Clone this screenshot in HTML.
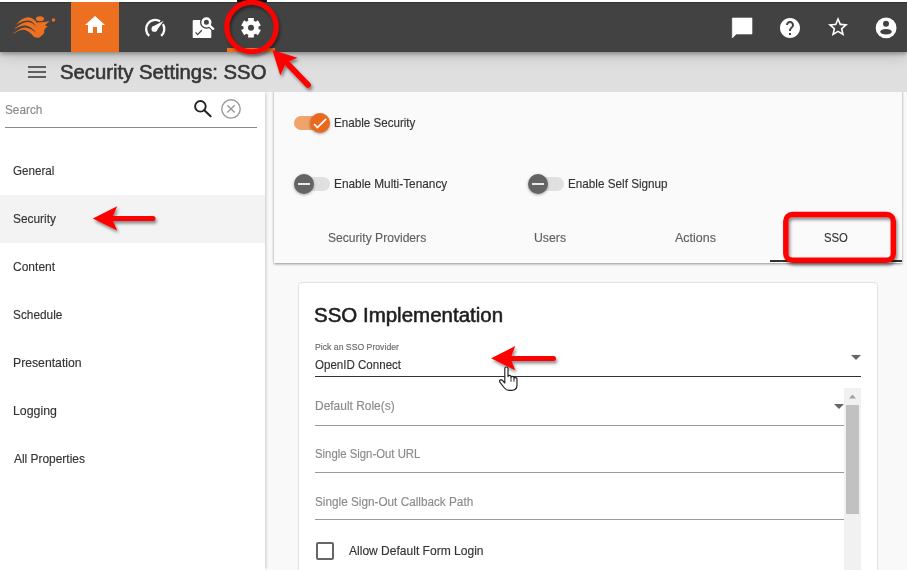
<!DOCTYPE html>
<html><head><meta charset="utf-8"><style>
html,body{margin:0;padding:0;width:907px;height:570px;overflow:hidden;background:#f9f9f9;font-family:"Liberation Sans",sans-serif;position:relative}
.a{position:absolute}
.t{position:absolute;white-space:nowrap;line-height:1;transform-origin:0 0}
</style></head><body>
<!-- content background -->
<!-- sidebar -->
<div class="a" style="left:0;top:92px;width:265px;height:478px;background:#fff;box-shadow:2px 0 3px -1px rgba(0,0,0,0.2)"></div>
<div class="a" style="left:0;top:195px;width:265px;height:48px;background:#f3f3f3"></div>
<div class="a" style="left:5px;top:127px;width:252px;height:1px;background:#8a8a8a"></div>
<!-- top card -->
<div class="a" style="left:274px;top:85px;width:628px;height:178px;background:#fafafa;box-shadow:0 1px 2.5px rgba(0,0,0,0.42)"></div>
<div class="a" style="left:770px;top:260px;width:132px;height:2px;background:#333"></div>
<!-- SSO card -->
<div class="a" style="left:298px;top:282px;width:578px;height:300px;background:#fff;border:1px solid #e2e2e2;border-radius:4px"></div>
<!-- title bar -->
<div class="a" style="left:0;top:52px;width:907px;height:40px;background:#dfdfdf"></div>
<!-- header -->
<div class="a" style="left:0;top:2px;width:907px;height:50px;background:#424242;box-shadow:0 2px 4px rgba(0,0,0,0.3), 0 4px 14px rgba(0,0,0,0.16)"></div>
<div class="a" style="left:0;top:2px;width:907px;height:1px;background:#333"></div>
<div class="a" style="left:71px;top:2px;width:48px;height:50px;background:#ec7020"></div>
<div class="a" style="left:227px;top:48px;width:48px;height:4px;background:#ec7020"></div>
<div class="a" style="left:0;top:0;width:907px;height:2px;background:#fff"></div>
<svg class="a" style="left:0;top:0" width="907" height="52" viewBox="0 0 907 52">
 <!-- logo -->
  <g fill="#ec7020">
  <ellipse cx="40" cy="18.7" rx="4.1" ry="2.5"/>
  <circle cx="53.5" cy="20" r="1.8"/>
  <path d="M13 34.3 Q20 29 25 30 Q30 31.5 33.5 36.5 Q36 38.2 39.5 37.6 L44 33.5 L44.3 29.8 L47.6 26 L44.6 25.6 L49.6 20.9 L44 22 L36.8 22.4 Q33 17.6 28.5 17.2 Q22 17.2 17 23.8 L15 28.6 Z"/>
 </g>
 <g fill="#424242">
  <path d="M16.6 24.6 Q23 20.2 28.5 20.4 Q33 20.8 36.8 27.2 Q32.5 22.2 27.5 22.1 Q21 22.3 14.6 29.2 Z"/>
  <path d="M14.6 29.6 Q20.5 25.2 25.5 25.5 Q31 26 36.3 33 Q30.5 27.6 25 27.4 Q19 27.6 12.6 34.6 Z"/>
 </g>
 <!-- home -->
 <path fill="#fff" d="M93 33v-6h4v6h5v-8h3L95 16 85 25h3v8z"/>
 <!-- gauge -->
 <path d="M149.23 35.87 A9.1 9.1 0 0 1 160.02 21.28" fill="none" stroke="#fff" stroke-width="2.3"/><path d="M162.92 24.18 A9.1 9.1 0 0 1 161.17 35.87" fill="none" stroke="#fff" stroke-width="2.3"/><circle cx="154.4" cy="28.9" r="2.9" fill="#fff"/><path d="M156.30 31.09 L163.7 20.8 L152.50 26.71 Z" fill="#fff"/>
 <!-- review -->
 <rect x="192.7" y="19.9" width="18.6" height="18.2" rx="1.2" fill="#fff"/>
 <circle cx="206.4" cy="22.3" r="6.4" fill="#424242"/>
 <path d="M209.5 25.5 L213.2 28.8" stroke="#424242" stroke-width="4.5" stroke-linecap="round"/>
 <circle cx="206.4" cy="22.3" r="3.8" fill="none" stroke="#fff" stroke-width="2.6"/>
 <path d="M209.5 25.5 L213.2 28.8" stroke="#fff" stroke-width="2.4" stroke-linecap="round"/>
 <path d="M195.6 32.4 L197.6 34.6 L201.8 30.2" fill="none" stroke="#424242" stroke-width="1.3"/>
 <!-- gear -->
 <path fill="#fff" fill-rule="evenodd" d="M248.28 20.65 L248.05 18.09 L253.95 18.09 L253.72 20.65 L255.78 21.84 L257.89 20.36 L260.84 25.48 L258.51 26.56 L258.51 28.94 L260.84 30.02 L257.89 35.14 L255.78 33.66 L253.72 34.85 L253.95 37.41 L248.05 37.41 L248.28 34.85 L246.22 33.66 L244.11 35.14 L241.16 30.02 L243.49 28.94 L243.49 26.56 L241.16 25.48 L244.11 20.36 L246.22 21.84 Z M254.00 27.75 A3.0 3.0 0 1 0 248.00 27.75 A3.0 3.0 0 1 0 254.00 27.75 Z"/>
 <!-- chat -->
 <path fill="#fff" stroke="#fff" stroke-width="0.6" stroke-linejoin="round" d="M752 18H732.3V38l4-4H752z"/>
 <!-- help -->
 <path fill="#fff" fill-rule="evenodd" transform="translate(778 16)" d="M12 2C6.48 2 2 6.48 2 12s4.48 10 10 10 10-4.48 10-10S17.52 2 12 2zm1 17h-2v-2h2v2zm2.07-7.75l-.9.92C13.45 12.9 13 13.5 13 15h-2v-.5c0-1.1.45-2.1 1.17-2.83l1.24-1.26c.37-.36.59-.86.59-1.41 0-1.1-.9-2-2-2s-2 .9-2 2H8c0-2.21 1.790-4 4-4s4 1.79 4 4c0 .88-.36 1.68-.93 2.25z"/>
 <!-- star -->
 <path fill="#fff" transform="translate(826 15)" d="M22 9.24l-7.19-.62L12 2 9.19 8.63 2 9.24l5.46 4.73L5.82 21 12 17.27 18.18 21l-1.63-7.03L22 9.24zM12 15.4l-3.76 2.27 1-4.28-3.32-2.88 4.38-.38L12 6.1l1.71 4.04 4.38.38-3.32 2.88 1 4.28L12 15.4z"/>
 <!-- account -->
 <circle cx="886.1" cy="27.9" r="10.4" fill="#fff"/>
 <circle cx="886" cy="23.8" r="3" fill="#424242"/>
 <ellipse cx="886" cy="31.7" rx="5.8" ry="2.8" fill="#424242"/>
</svg>
<!-- hamburger -->
<div class="a" style="left:28px;top:66px;width:18px;height:2px;background:#5e5e5e"></div>
<div class="a" style="left:28px;top:71px;width:18px;height:2px;background:#5e5e5e"></div>
<div class="a" style="left:28px;top:76px;width:18px;height:2px;background:#5e5e5e"></div>
<!-- search icons -->
<svg class="a" style="left:185px;top:92px" width="80" height="40" viewBox="185 92 80 40">
 <circle cx="200.4" cy="106.3" r="5.3" fill="none" stroke="#222" stroke-width="1.9"/>
 <path d="M204.3 110.2 L210.6 116.3" stroke="#222" stroke-width="2" stroke-linecap="round"/>
 <circle cx="231" cy="108.9" r="9.2" fill="none" stroke="#9a9a9a" stroke-width="1.4"/>
 <path d="M227.3 105.2 L234.7 112.6 M234.7 105.2 L227.3 112.6" stroke="#9a9a9a" stroke-width="1.4"/>
</svg>
<!-- toggles -->
<div class="a" style="left:294px;top:116px;width:34px;height:14px;border-radius:7px;background:#f0a36a"></div>
<div class="a" style="left:310px;top:113px;width:20px;height:20px;border-radius:10px;background:#e96a1e;box-shadow:0 1px 3px rgba(0,0,0,0.35)"></div>
<svg class="a" style="left:310px;top:113px" width="20" height="20" viewBox="0 0 20 20"><path d="M4 11 L7.4 14.6 L16.2 5.9" fill="none" stroke="#fff" stroke-width="1.7"/></svg>

<div class="a" style="left:295px;top:177px;width:35px;height:14px;border-radius:7px;background:#e0e0e0"></div>
<div class="a" style="left:294px;top:174px;width:20px;height:20px;border-radius:10px;background:#646464;box-shadow:0 1px 3px rgba(0,0,0,0.35)"></div>
<div class="a" style="left:298px;top:183px;width:12px;height:2px;background:#eaeaea"></div>

<div class="a" style="left:529px;top:177px;width:35px;height:14px;border-radius:7px;background:#e0e0e0"></div>
<div class="a" style="left:528px;top:174px;width:20px;height:20px;border-radius:10px;background:#646464;box-shadow:0 1px 3px rgba(0,0,0,0.35)"></div>
<div class="a" style="left:532px;top:183px;width:12px;height:2px;background:#eaeaea"></div>

<!-- form lines -->
<div class="a" style="left:315px;top:376px;width:546px;height:1px;background:#333"></div>
<div class="a" style="left:315px;top:425px;width:529px;height:1px;background:#9a9a9a"></div>
<div class="a" style="left:315px;top:472px;width:529px;height:1px;background:#9a9a9a"></div>
<div class="a" style="left:315px;top:519px;width:529px;height:1px;background:#9a9a9a"></div>
<svg class="a" style="left:0;top:0" width="907" height="570" viewBox="0 0 907 570">
 <path d="M851 355 L861 355 L856 360 Z" fill="#666"/>
 <path d="M834 404 L844 404 L839 409 Z" fill="#666"/>
</svg>
<!-- scrollbar -->
<div class="a" style="left:844px;top:388px;width:17px;height:182px;background:#f1f1f1"></div>
<div class="a" style="left:846px;top:405px;width:13px;height:109px;background:#c1c1c1"></div>
<svg class="a" style="left:844px;top:388px" width="17" height="17" viewBox="0 0 17 17"><path d="M5 10.5 L12 10.5 L8.5 6.5 Z" fill="#a3a3a3"/></svg>
<!-- checkbox -->
<div class="a" style="left:316px;top:542px;width:14px;height:14px;border:2px solid #666;border-radius:2px"></div>

<span class="t" style="left:60.39px;top:62.01px;font-size:20.36px;color:#363636;-webkit-text-stroke:0.6px #363636;transform:scaleX(0.9968)">Security Settings: SSO</span>
<span class="t" style="left:4.71px;top:103.01px;font-size:13.04px;color:#8a8a8a;-webkit-text-stroke:0.15px #8a8a8a;transform:scaleX(0.9049)">Search</span>
<span class="t" style="left:12.82px;top:164.00px;font-size:13.19px;color:#333;-webkit-text-stroke:0.15px #333;transform:scaleX(0.8817)">General</span>
<span class="t" style="left:12.80px;top:212.01px;font-size:13.04px;color:#333;-webkit-text-stroke:0.15px #333;transform:scaleX(0.9131)">Security</span>
<span class="t" style="left:12.80px;top:260.01px;font-size:13.04px;color:#333;-webkit-text-stroke:0.15px #333;transform:scaleX(0.9222)">Content</span>
<span class="t" style="left:12.81px;top:308.01px;font-size:13.04px;color:#333;-webkit-text-stroke:0.15px #333;transform:scaleX(0.9095)">Schedule</span>
<span class="t" style="left:12.72px;top:356.01px;font-size:13.04px;color:#333;-webkit-text-stroke:0.15px #333;transform:scaleX(0.9377)">Presentation</span>
<span class="t" style="left:12.71px;top:404.01px;font-size:13.04px;color:#333;-webkit-text-stroke:0.15px #333;transform:scaleX(0.9465)">Logging</span>
<span class="t" style="left:13.70px;top:452.01px;font-size:13.04px;color:#333;-webkit-text-stroke:0.15px #333;transform:scaleX(0.9146)">All Properties</span>
<span class="t" style="left:333.87px;top:117.00px;font-size:12.46px;color:#333;-webkit-text-stroke:0.15px #333;transform:scaleX(0.9333)">Enable Security</span>
<span class="t" style="left:334.05px;top:178.01px;font-size:12.90px;color:#333;-webkit-text-stroke:0.15px #333;transform:scaleX(0.9192)">Enable Multi-Tenancy</span>
<span class="t" style="left:567.56px;top:178.01px;font-size:12.90px;color:#333;-webkit-text-stroke:0.15px #333;transform:scaleX(0.9085)">Enable Self Signup</span>
<span class="t" style="left:328.19px;top:232.01px;font-size:12.75px;color:#5f5f5f;-webkit-text-stroke:0.15px #5f5f5f;transform:scaleX(0.9491)">Security Providers</span>
<span class="t" style="left:533.92px;top:232.01px;font-size:12.75px;color:#5f5f5f;-webkit-text-stroke:0.15px #5f5f5f;transform:scaleX(0.9629)">Users</span>
<span class="t" style="left:675.40px;top:232.01px;font-size:12.75px;color:#5f5f5f;-webkit-text-stroke:0.15px #5f5f5f;transform:scaleX(0.9777)">Actions</span>
<span class="t" style="left:824.24px;top:232.01px;font-size:12.75px;color:#333;-webkit-text-stroke:0.15px #333;transform:scaleX(0.8855)">SSO</span>
<span class="t" style="left:314.47px;top:305.62px;font-size:19.42px;color:#1e1e1e;-webkit-text-stroke:0.55px #1e1e1e;transform:scaleX(1.0559)">SSO Implementation</span>
<span class="t" style="left:314.71px;top:343.01px;font-size:9.13px;color:#6a6a6a;-webkit-text-stroke:0.15px #6a6a6a;transform:scaleX(0.9510)">Pick an SSO Provider</span>
<span class="t" style="left:314.82px;top:359.00px;font-size:12.32px;color:#333;-webkit-text-stroke:0.15px #333;transform:scaleX(0.9381)">OpenID Connect</span>
<span class="t" style="left:314.74px;top:400.01px;font-size:12.03px;color:#8a8a8a;-webkit-text-stroke:0.15px #8a8a8a;transform:scaleX(0.9943)">Default Role(s)</span>
<span class="t" style="left:315.03px;top:448.00px;font-size:12.46px;color:#8a8a8a;-webkit-text-stroke:0.15px #8a8a8a;transform:scaleX(0.9113)">Single Sign-Out URL</span>
<span class="t" style="left:314.61px;top:496.01px;font-size:12.61px;color:#8a8a8a;-webkit-text-stroke:0.15px #8a8a8a;transform:scaleX(0.9328)">Single Sign-Out Callback Path</span>
<span class="t" style="left:349.10px;top:544.02px;font-size:13.04px;color:#333;-webkit-text-stroke:0.15px #333;transform:scaleX(0.9240)">Allow Default Form Login</span>

<!-- annotations -->
<div class="a" style="left:237px;top:0;width:30px;height:2px;background:#111;filter:blur(0.4px)"></div>
<svg class="a" style="left:0;top:0" width="907" height="570" viewBox="0 0 907 570">
 <defs><clipPath id="clipc"><rect x="0" y="2" width="907" height="600"/></clipPath><filter id="sh" x="-20%" y="-20%" width="140%" height="140%"><feDropShadow dx="1.5" dy="2.5" stdDeviation="1.6" flood-color="#000" flood-opacity="0.45"/></filter></defs>
 <g filter="url(#sh)">
  <circle cx="251.5" cy="27" r="24.7" fill="none" stroke="#f00" stroke-width="5"/>
    <path d="M272.4 50 L297.5 57.8 L286 62.5 L280.3 75.6 Z" fill="#f00"/>
  <path d="M284 60 L308 85" stroke="#f00" stroke-width="5.8" stroke-linecap="round"/>
  <path d="M92.8 218.4 L117.2 206.2 L112 218.4 L117.2 230.5 Z" fill="#f00"/>
  <path d="M110 218.4 L153 218.4" stroke="#f00" stroke-width="5" stroke-linecap="round"/>
  <path d="M491.1 358.2 L515.3 346 L510.5 358.2 L515.3 370.3 Z" fill="#f00"/>
  <path d="M508 358.4 L553.5 358.4" stroke="#f00" stroke-width="5" stroke-linecap="round"/>
  <rect x="785.8" y="214.5" width="107.5" height="45.8" rx="6.5" fill="none" stroke="#f00" stroke-width="5.4"/>
 </g>
</svg>
<!-- hand cursor -->
<svg class="a" style="left:0;top:0" width="907" height="570" viewBox="0 0 907 570">
 <path d="M504.8 368.6 Q504.8 367 506.4 367 Q508 367 508 368.6 L508 376.6 Q508 375.3 509.5 375.3 Q511 375.3 511 376.6 L511 377.4 Q511 376.3 512.5 376.3 Q514 376.3 514 377.6 L514 378.6 Q514 377.6 515.5 377.6 Q517 377.6 517 379.1 L517 385 Q517 390.3 511.5 390.3 L509 390.3 Q506 390.3 504 387.5 L499.9 382.2 Q499 380.4 500.5 379.9 Q501.8 379.5 503 381 L504.8 383 Z" fill="#fff" stroke="#1e1e1e" stroke-width="1.15" stroke-linejoin="round"/>
 <path d="M511 377.8 V381.8 M514 378.8 V381.8" stroke="#1e1e1e" stroke-width="0.9"/>
</svg>
</body></html>
